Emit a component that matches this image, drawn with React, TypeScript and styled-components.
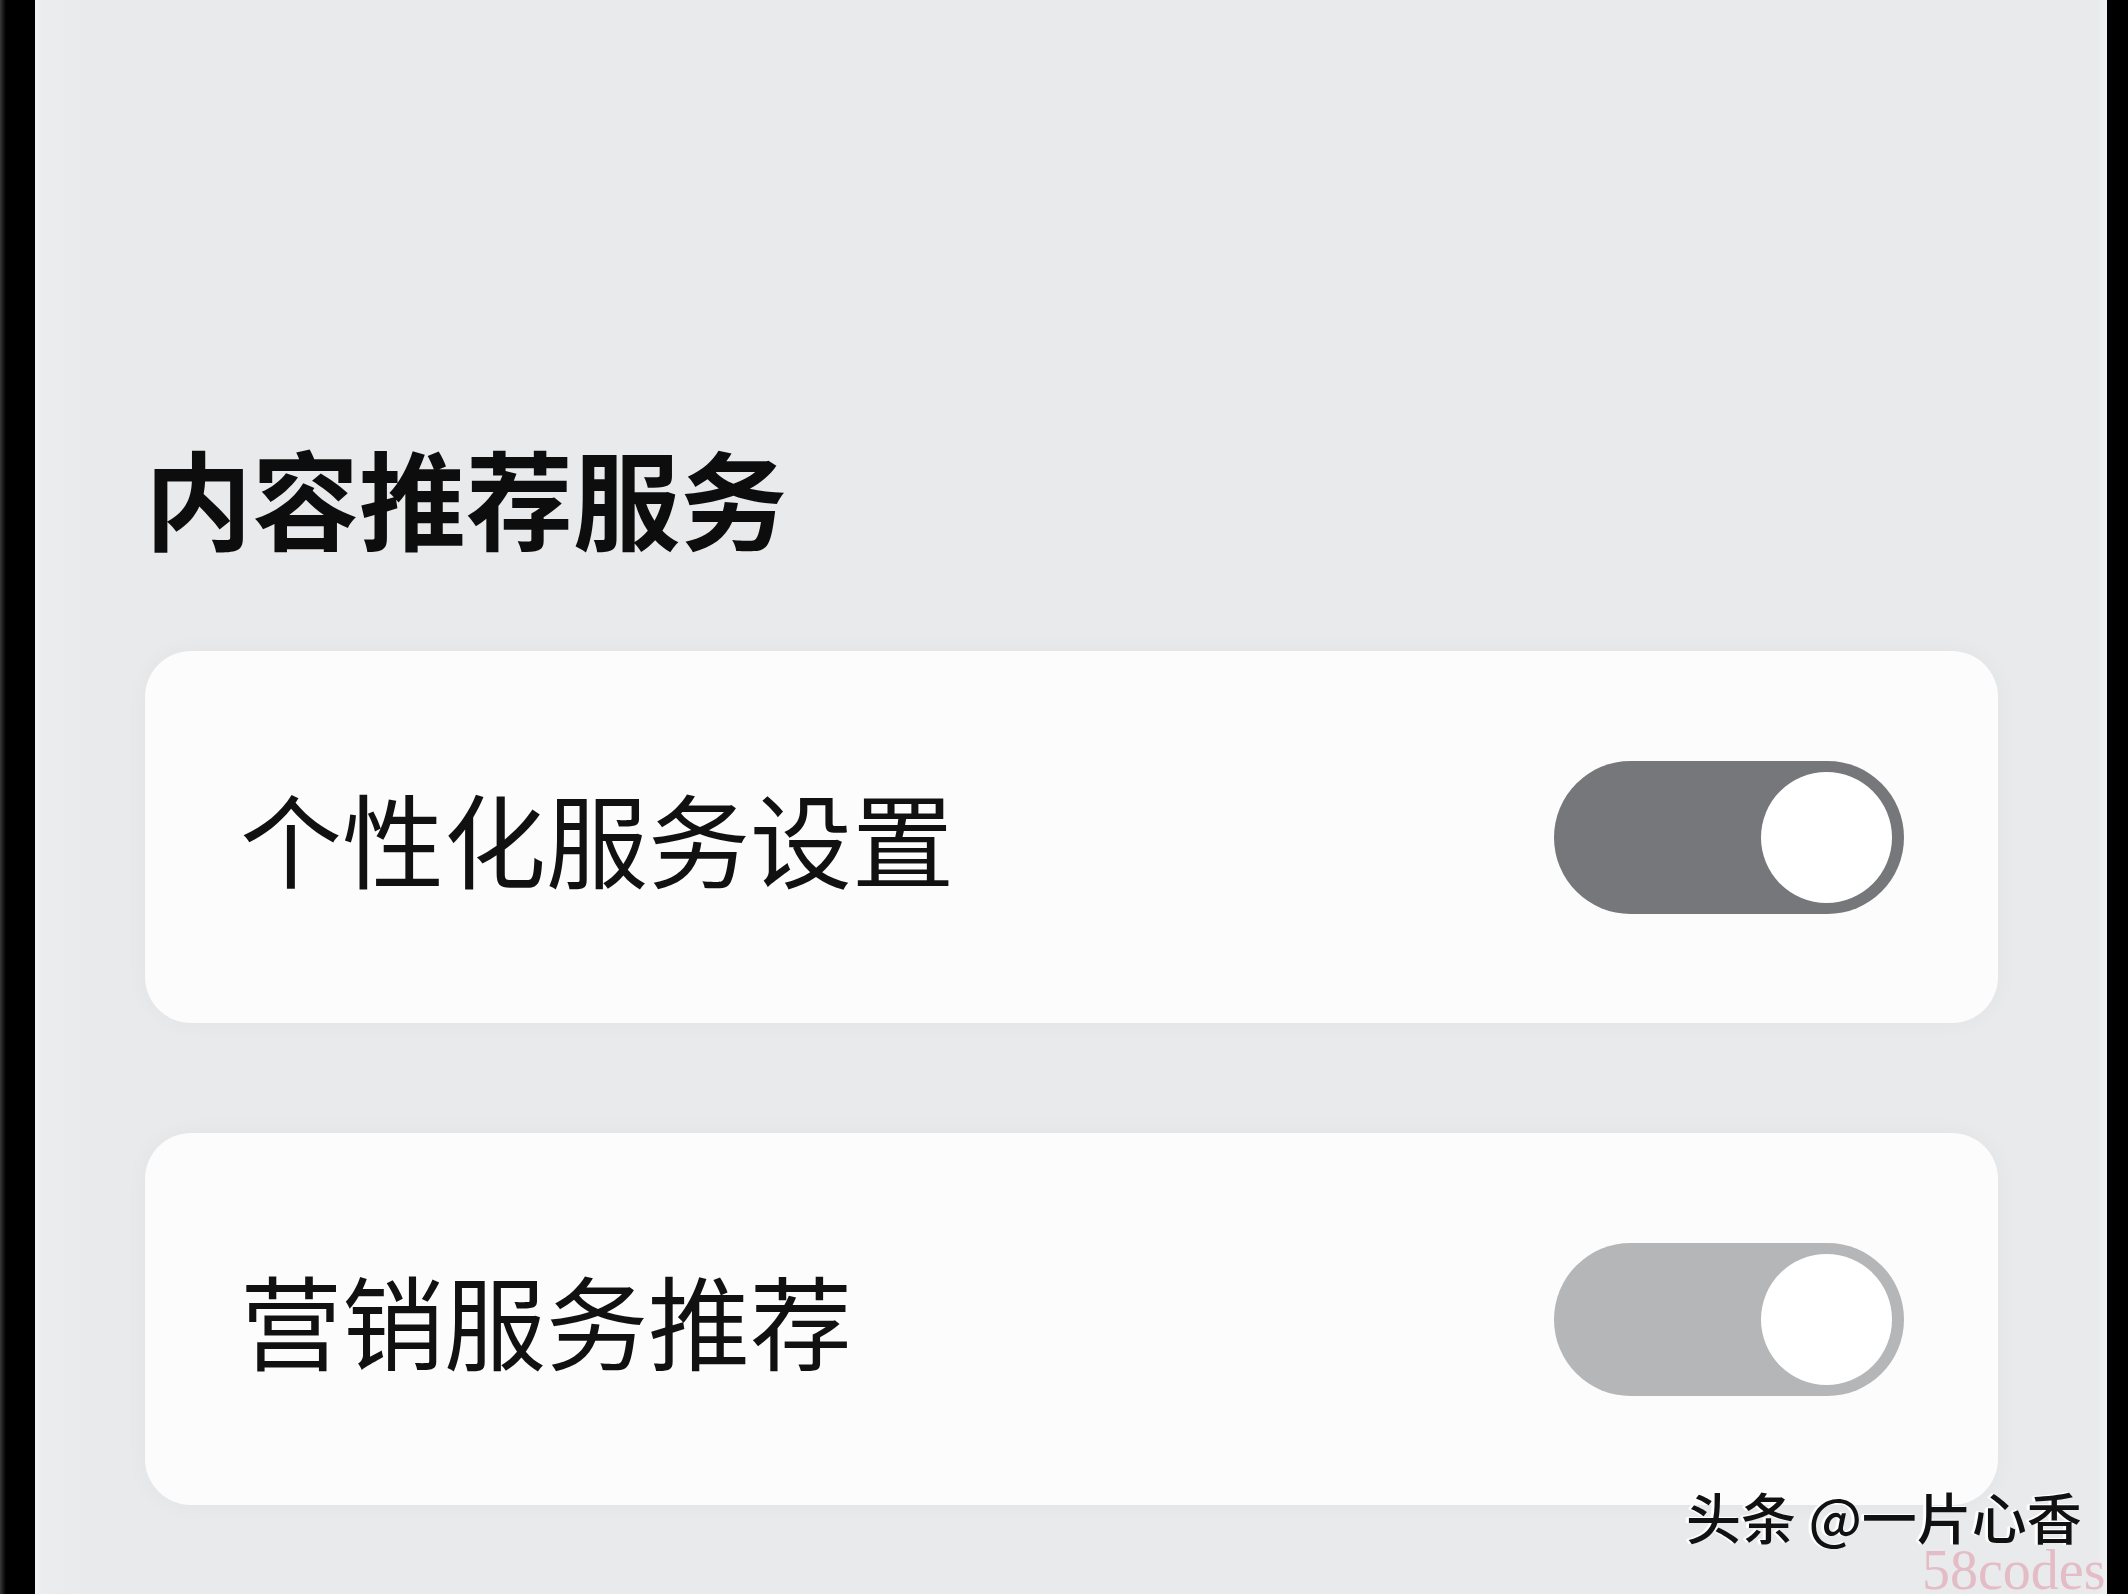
import React from "react";
import styled, { createGlobalStyle } from "styled-components";

const Global = createGlobalStyle`
  html, body { margin: 0; padding: 0; height: 100%; overflow: hidden; background: #000; }
  #root { height: 100%; }
  * { box-sizing: border-box; }
`;

const Frame = styled.div`
  display: flex;
  width: 2128px;
  height: 1594px;
  background: #000;
`;

const LeftBezel = styled.div`
  width: 35px;
  flex-shrink: 0;
  background: linear-gradient(to right, #3a3a3a 0px, #1a1a1a 3px, #000 6px, #000 100%);
`;

const RightBezel = styled.div`
  width: 21px;
  flex-shrink: 0;
  background: #000;
`;

const Screen = styled.div`
  position: relative;
  flex: 1;
  overflow: hidden;
  background: linear-gradient(to right, #f1f3f5 0px, #eaeced 8px, #e9eaeb 60px, #e9eaeb calc(100% - 10px), #eef0f2 100%);
  padding: 432px 109px 0 110px;
  display: flex;
  flex-direction: column;
  font-family: "Noto Sans CJK SC", "Noto Sans", sans-serif;
`;

const Title = styled.h1`
  margin: 0 0 91px 0;
  font-size: 107px;
  line-height: 1.2;
  font-weight: 700;
  color: #0d0d0d;
`;

const CardList = styled.div`
  display: flex;
  flex-direction: column;
  gap: 110px;
`;

const Card = styled.div`
  height: 372px;
  border-radius: 46px;
  background: #fcfcfc;
  box-shadow: 0 0 24px rgba(0, 0, 0, 0.035);
  display: flex;
  align-items: center;
  justify-content: space-between;
  padding: 0 94px 0 95px;
`;

const Label = styled.span`
  font-size: 102px;
  line-height: 1;
  font-weight: 400;
  color: #111;
`;

const Track = styled.div<{ $tone: "dark" | "light" }>`
  width: 350px;
  height: 153px;
  border-radius: 77px;
  background: ${(p) => (p.$tone === "dark" ? "#75777a" : "#b4b6b7")};
  display: flex;
  align-items: center;
  justify-content: flex-end;
  padding-right: 12px;
`;

const Knob = styled.div`
  width: 131px;
  height: 131px;
  border-radius: 50%;
  background: #ffffff;
`;

const Watermark = styled.div`
  position: absolute;
  left: 1651px;
  top: 1488px;
  display: flex;
  flex-direction: column;
  align-items: flex-start;
`;

const Credit = styled.span`
  font-family: "Noto Sans CJK SC", "Noto Sans", sans-serif;
  font-size: 55px;
  line-height: 1;
  font-weight: 500;
  color: #111;
  text-shadow: -3px 0 0 #ffffff, -2px -1px 0 #ffffff;
  white-space: pre;
`;

const Stamp = styled.span`
  margin-left: 236px;
  margin-top: 6px;
  font-family: "Liberation Serif", serif;
  font-size: 56px;
  line-height: 0.75;
  color: rgba(224, 150, 165, 0.55);
  white-space: pre;
`;

type Item = { label: string; tone: "dark" | "light" };

const items: Item[] = [
  { label: "个性化服务设置", tone: "dark" },
  { label: "营销服务推荐", tone: "light" },
];

export default function App() {
  return (
    <>
      <Global />
      <Frame>
        <LeftBezel />
        <Screen>
          <Title>内容推荐服务</Title>
          <CardList>
            {items.map((it) => (
              <Card key={it.label}>
                <Label>{it.label}</Label>
                <Track $tone={it.tone}>
                  <Knob />
                </Track>
              </Card>
            ))}
          </CardList>
          <Watermark>
            <Credit>头条 @一片心香</Credit>
            <Stamp>58codes</Stamp>
          </Watermark>
        </Screen>
        <RightBezel />
      </Frame>
    </>
  );
}
